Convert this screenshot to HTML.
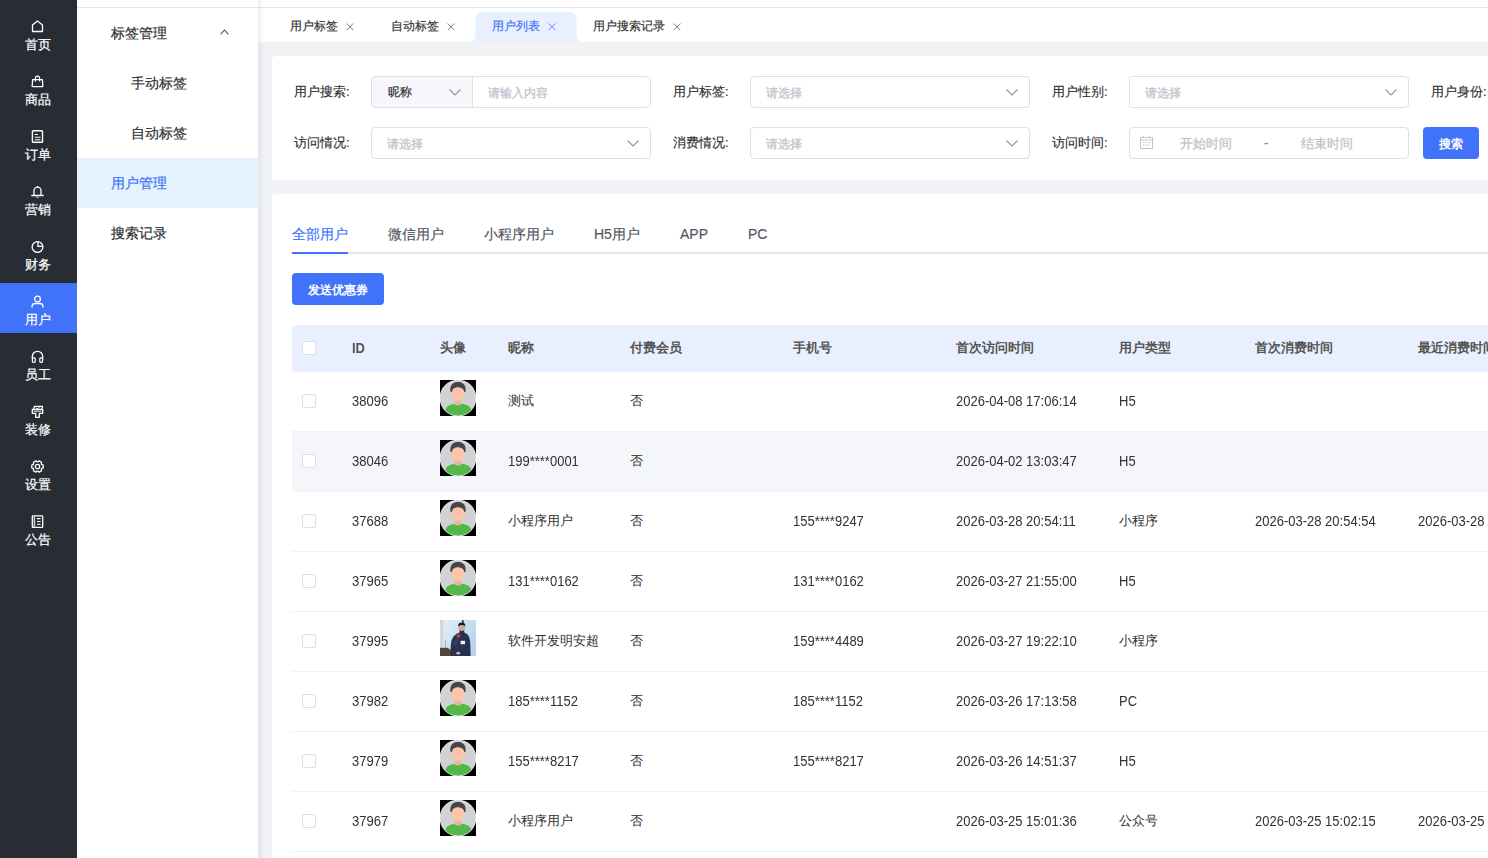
<!DOCTYPE html>
<html><head><meta charset="utf-8">
<style>
*{box-sizing:border-box;margin:0;padding:0}
html,body{width:1488px;height:858px;overflow:hidden;background:#f0f2f5;font-family:"Liberation Sans",sans-serif;color:#303133}
#side{position:absolute;left:0;top:0;width:77px;height:858px;background:#282c35}
.si{position:absolute;left:0;width:77px;height:50px;color:#fff;text-align:center}
.si.act{background:#4073fa}
.si svg{position:absolute;left:31px;top:12px;width:13px;height:13px}
.si span{position:absolute;left:-1px;width:77px;top:29px;font-size:13px;line-height:16px;font-weight:normal;-webkit-text-stroke:0.2px #fff}
#sub{position:absolute;left:77px;top:0;width:181px;height:858px;background:#fff}
.mi{position:absolute;left:0;width:181px;height:50px;font-size:14px;line-height:51px;color:#303133;-webkit-text-stroke:0.2px currentColor}
.mi.act{background:#e6f2fe;color:#4073fa}
#topline{position:absolute;left:77px;top:0;width:1411px;height:8px;background:#fff;border-bottom:1px solid #e6e8f0}
#tabs{position:absolute;left:258px;top:8px;width:1230px;height:34px;background:#fff}
.tb{position:absolute;top:0;height:34px;font-size:12px;line-height:37px;color:#303133;white-space:nowrap;-webkit-text-stroke:0.15px currentColor}
.x{position:absolute;top:15px;width:8px;height:7.5px}
.card{position:absolute;background:#fff;border-radius:4px}
.lbl{position:absolute;font-size:13px;line-height:16px;color:#303133;white-space:nowrap;-webkit-text-stroke:0.15px currentColor}
.inp{position:absolute;border:1px solid #dcdfe6;border-radius:4px;background:#fff;height:32px}
.ph{position:absolute;font-size:12px;line-height:16px;color:#c0c4cc;white-space:nowrap;-webkit-text-stroke:0.3px #c0c4cc}
.chev{position:absolute;width:12px;height:7px}
.btn{position:absolute;background:#4073fa;color:#fff;border-radius:4px;font-size:12px;font-weight:bold;text-align:center;padding-top:1px}
.th{position:absolute;font-size:13px;font-weight:bold;color:#555;line-height:16px;white-space:nowrap}
.lt{transform:scaleY(1.09);transform-origin:0 3px}
.row{position:absolute;left:292px;width:1196px;height:60px;border-bottom:1px solid #f2f2f2}
.row.st{background:#f5f6fa}
.td{position:absolute;font-size:13px;line-height:16px;color:#303133;top:21px;white-space:nowrap}
.cb{position:absolute;width:14px;height:14px;border:1px solid #dcdfe6;border-radius:2px;background:#fff}
.av{position:absolute;top:8px;width:36px;height:36px}
.ctab{position:absolute;top:226px;font-size:14px;line-height:16px;color:#505460;white-space:nowrap;-webkit-text-stroke:0.15px currentColor}
</style></head><body>

<div id="side">
<div class="si" style="top:8px"><svg viewBox="0 0 13 13"><path d="M1.5 11.5V5L6.5 1L11.5 5V11.5Z" fill="none" stroke="#fff" stroke-width="1.3" stroke-linejoin="round"/></svg><span>首页</span></div>
<div class="si" style="top:63px"><svg viewBox="0 0 13 13"><path d="M1.2 11.6L1.6 4.6H11.4L11.8 11.6Z" fill="none" stroke="#fff" stroke-width="1.3" stroke-linejoin="round"/><path d="M4.4 6.5V3.3A2.1 2.1 0 0 1 8.6 3.3V6.5" fill="none" stroke="#fff" stroke-width="1.2"/></svg><span>商品</span></div>
<div class="si" style="top:118px"><svg viewBox="0 0 13 13"><rect x="1.4" y="0.8" width="10.1" height="11.4" rx="0.8" fill="none" stroke="#fff" stroke-width="1.4"/><path d="M3.6 4.5H7M3.8 7.3H9.4M3.8 9.7H9.4" stroke="#fff" stroke-width="1.1"/></svg><span>订单</span></div>
<div class="si" style="top:173px"><svg viewBox="0 0 13 13"><path d="M3 10.2V5.6A3.5 3.5 0 0 1 10 5.6V10.2" fill="none" stroke="#fff" stroke-width="1.3"/><path d="M0.8 10.5H12.2" stroke="#fff" stroke-width="1.3" stroke-linecap="round"/><path d="M5.6 12.4H7.4" stroke="#fff" stroke-width="1"/><path d="M6.5 1.2V2.2" stroke="#fff" stroke-width="1.2"/></svg><span>营销</span></div>
<div class="si" style="top:228px"><svg viewBox="0 0 13 13"><circle cx="6.5" cy="7" r="5.4" fill="none" stroke="#fff" stroke-width="1.3"/><path d="M7 1.4V6.3H12" fill="none" stroke="#fff" stroke-width="1.3"/></svg><span>财务</span></div>
<div class="si act" style="top:283px"><svg viewBox="0 0 13 13"><circle cx="6.5" cy="4" r="2.9" fill="none" stroke="#fff" stroke-width="1.3"/><path d="M1 12.4V11.4A3.2 3.2 0 0 1 4.2 8.5H8.8A3.2 3.2 0 0 1 12 11.4V12.4" fill="none" stroke="#fff" stroke-width="1.3"/></svg><span>用户</span></div>
<div class="si" style="top:338px"><svg viewBox="0 0 13 13"><path d="M1.3 9V6.5A5.2 5.2 0 0 1 11.7 6.5V9" fill="none" stroke="#fff" stroke-width="1.3"/><rect x="1.4" y="7.8" width="2.8" height="4.5" rx="1" fill="none" stroke="#fff" stroke-width="1.2"/><rect x="8.8" y="7.8" width="2.8" height="4.5" rx="1" fill="none" stroke="#fff" stroke-width="1.2"/></svg><span>员工</span></div>
<div class="si" style="top:393px"><svg viewBox="0 0 13 13"><path d="M2.6 4.3L3.4 1.4H11.6L10.8 4.3" fill="none" stroke="#fff" stroke-width="1.3" stroke-linejoin="round"/><path d="M5 3L6.8 3.6L8.6 2.4" fill="none" stroke="#fff" stroke-width="0.9"/><path d="M1.3 4.5H11.7V8.3H8.3V12.3H4.7V8.3H1.3Z" fill="none" stroke="#fff" stroke-width="1.3" stroke-linejoin="round"/><path d="M3 6.4H10" stroke="#fff" stroke-width="0.8"/></svg><span>装修</span></div>
<div class="si" style="top:448px"><svg viewBox="0 0 13 13"><path d="M10.63 4.48 L12.22 5.07 L12.22 7.93 L10.63 8.52 L10.31 9.07 L10.60 10.74 L8.13 12.17 L6.82 11.09 L6.18 11.09 L4.87 12.17 L2.40 10.74 L2.69 9.07 L2.37 8.52 L0.78 7.93 L0.78 5.07 L2.37 4.48 L2.69 3.93 L2.40 2.26 L4.87 0.83 L6.18 1.91 L6.82 1.91 L8.13 0.83 L10.60 2.26 L10.31 3.93Z" fill="none" stroke="#fff" stroke-width="1.3" stroke-linejoin="round"/><circle cx="6.5" cy="6.5" r="2.2" fill="none" stroke="#fff" stroke-width="1.3"/></svg><span>设置</span></div>
<div class="si" style="top:503px"><svg viewBox="0 0 13 13"><rect x="1.3" y="0.9" width="10.4" height="11.6" rx="0.8" fill="none" stroke="#fff" stroke-width="1.3"/><path d="M3.4 1.5V12" stroke="#ccc" stroke-width="1.6"/><path d="M6 3.6H9.5M6 6.5H9.5M6 9.3H9.5" stroke="#fff" stroke-width="1.1"/></svg><span>公告</span></div>
</div>
<div id="sub">
<div class="mi" style="top:8px;padding-left:34px">标签管理</div>
<div class="mi" style="top:58px;padding-left:54px">手动标签</div>
<div class="mi" style="top:108px;padding-left:54px">自动标签</div>
<div class="mi act" style="top:158px;padding-left:34px">用户管理</div>
<div class="mi" style="top:208px;padding-left:34px">搜索记录</div>
<svg style="position:absolute;left:142.5px;top:29px;width:9px;height:6px" viewBox="0 0 9 6"><path d="M0.6 5.4L4.5 1.2L8.4 5.4" fill="none" stroke="#606266" stroke-width="1.15"/></svg>
</div>
<div id="topline"></div>
<div id="tabs">
<svg style="position:absolute;left:214px;top:4px;width:108px;height:30px" viewBox="0 0 108 30"><path d="M0 30L1.2 28.6C2.8 26.6 3.5 25 3.5 22V6A6 6 0 0 1 9.5 0H98.5A6 6 0 0 1 104.5 6V22C104.5 25 105.2 26.6 106.8 28.6L108 30Z" fill="#e8effe"/></svg>
<div class="tb" style="left:32px;color:#303133">用户标签</div>
<svg class="x" style="left:88px" viewBox="0 0 8 8"><path d="M0.5 0.5L7.5 7.5M7.5 0.5L0.5 7.5" stroke="#606266" stroke-width="0.9"/></svg>
<div class="tb" style="left:133px;color:#303133">自动标签</div>
<svg class="x" style="left:189px" viewBox="0 0 8 8"><path d="M0.5 0.5L7.5 7.5M7.5 0.5L0.5 7.5" stroke="#606266" stroke-width="0.9"/></svg>
<div class="tb" style="left:234px;color:#4073fa">用户列表</div>
<svg class="x" style="left:290px" viewBox="0 0 8 8"><path d="M0.5 0.5L7.5 7.5M7.5 0.5L0.5 7.5" stroke="#4073fa" stroke-width="0.9"/></svg>
<div class="tb" style="left:335px;color:#303133">用户搜索记录</div>
<svg class="x" style="left:415px" viewBox="0 0 8 8"><path d="M0.5 0.5L7.5 7.5M7.5 0.5L0.5 7.5" stroke="#606266" stroke-width="0.9"/></svg>
</div>
<div class="card" style="left:272px;top:56px;width:1240px;height:124px"></div>
<div class="lbl" style="left:294px;top:84px">用户搜索:</div>
<div class="lbl" style="left:673px;top:84px">用户标签:</div>
<div class="lbl" style="left:1052px;top:84px">用户性别:</div>
<div class="lbl" style="left:1431px;top:84px">用户身份:</div>
<div class="lbl" style="left:294px;top:135px">访问情况:</div>
<div class="lbl" style="left:673px;top:135px">消费情况:</div>
<div class="lbl" style="left:1052px;top:135px">访问时间:</div>
<div class="inp" style="left:371px;top:76px;width:280px"></div>
<div style="position:absolute;left:372px;top:77px;width:101px;height:30px;background:#f5f7fa;border-right:1px solid #dcdfe6;border-radius:3px 0 0 3px"></div>
<div style="position:absolute;left:388px;top:84px;font-size:12px;line-height:16px;color:#303133;-webkit-text-stroke:0.2px #303133">昵称</div>
<svg class="chev" style="left:449px;top:89px" viewBox="0 0 12 7"><path d="M0.5 0.5L6 6L11.5 0.5" fill="none" stroke="#909399" stroke-width="1.1"/></svg>
<div class="ph" style="left:488px;top:85px">请输入内容</div>
<div class="inp" style="left:750px;top:76px;width:280px"></div>
<div class="ph" style="left:766px;top:85px">请选择</div>
<svg class="chev" style="left:1006px;top:89px" viewBox="0 0 12 7"><path d="M0.5 0.5L6 6L11.5 0.5" fill="none" stroke="#909399" stroke-width="1.1"/></svg>
<div class="inp" style="left:1129px;top:76px;width:280px"></div>
<div class="ph" style="left:1145px;top:85px">请选择</div>
<svg class="chev" style="left:1385px;top:89px" viewBox="0 0 12 7"><path d="M0.5 0.5L6 6L11.5 0.5" fill="none" stroke="#909399" stroke-width="1.1"/></svg>
<div class="inp" style="left:371px;top:127px;width:280px"></div>
<div class="ph" style="left:387px;top:136px">请选择</div>
<svg class="chev" style="left:627px;top:140px" viewBox="0 0 12 7"><path d="M0.5 0.5L6 6L11.5 0.5" fill="none" stroke="#909399" stroke-width="1.1"/></svg>
<div class="inp" style="left:750px;top:127px;width:280px"></div>
<div class="ph" style="left:766px;top:136px">请选择</div>
<svg class="chev" style="left:1006px;top:140px" viewBox="0 0 12 7"><path d="M0.5 0.5L6 6L11.5 0.5" fill="none" stroke="#909399" stroke-width="1.1"/></svg>
<div class="inp" style="left:1129px;top:127px;width:280px"></div>
<svg style="position:absolute;left:1140px;top:136px;width:13px;height:13px" viewBox="0 0 13 13"><rect x="0.5" y="1.5" width="12" height="11" fill="none" stroke="#c0c4cc" stroke-width="1"/><path d="M0.5 4H12.5M3 6.5h1.5M5.75 6.5h1.5M8.5 6.5h1.5M3 9h1.5M5.75 9h1.5M8.5 9h1.5M3.5 0V2M9.5 0V2" stroke="#c0c4cc" stroke-width="1"/></svg>
<div class="ph" style="left:1180px;top:136px;font-size:13px">开始时间</div>
<div class="ph" style="left:1264px;top:135px;font-size:13px;color:#606266">-</div>
<div class="ph" style="left:1301px;top:136px;font-size:13px">结束时间</div>
<div class="btn" style="left:1423px;top:127px;width:56px;height:32px;line-height:32px">搜索</div>
<div class="card" style="left:272px;top:194px;width:1240px;height:700px"></div>
<div style="position:absolute;left:292px;top:252px;width:1196px;height:2px;background:#e4e7ed"></div>
<div style="position:absolute;left:292px;top:252px;width:56px;height:2px;background:#4073fa"></div>
<div class="ctab" style="left:292px;color:#4073fa">全部用户</div>
<div class="ctab" style="left:388px;color:#505460">微信用户</div>
<div class="ctab" style="left:484px;color:#505460">小程序用户</div>
<div class="ctab" style="left:594px;color:#505460">H5用户</div>
<div class="ctab" style="left:680px;color:#505460">APP</div>
<div class="ctab" style="left:748px;color:#505460">PC</div>
<div class="btn" style="left:292px;top:273px;width:92px;height:32px;line-height:32px">发送优惠券</div>
<div style="position:absolute;left:292px;top:325px;width:1210px;height:47px;background:#e8effe;border-radius:4px"></div>
<div class="cb" style="left:302px;top:341px"></div>
<div class="th lt" style="left:352px;top:340px">ID</div>
<div class="th" style="left:440px;top:340px">头像</div>
<div class="th" style="left:508px;top:340px">昵称</div>
<div class="th" style="left:630px;top:340px">付费会员</div>
<div class="th" style="left:793px;top:340px">手机号</div>
<div class="th" style="left:956px;top:340px">首次访问时间</div>
<div class="th" style="left:1119px;top:340px">用户类型</div>
<div class="th" style="left:1255px;top:340px">首次消费时间</div>
<div class="th" style="left:1418px;top:340px">最近消费时间</div>
<div class="row" style="top:372px">
<div class="cb" style="left:10px;top:22px"></div>
<div class="td lt" style="left:60px">38096</div>
<svg class="av" style="left:148px" viewBox="0 0 36 36"><rect width="36" height="36" fill="#000"/><circle cx="18" cy="18" r="18.3" fill="#eeeeee"/><circle cx="18" cy="18" r="17.7" fill="#d1d2d3"/><clipPath id="c0"><circle cx="18" cy="18" r="17.7"/></clipPath><g clip-path="url(#c0)"><ellipse cx="18.4" cy="29.6" rx="12.7" ry="6.2" fill="#52b848"/><path d="M14.9 18.5H21V24.8Q18 26.2 14.9 24.8Z" fill="#f0b396"/><ellipse cx="11.9" cy="13.6" rx="1.3" ry="1.8" fill="#fbc2a6"/><ellipse cx="24.5" cy="13.6" rx="1.3" ry="1.8" fill="#fbc2a6"/><ellipse cx="18.2" cy="13.6" rx="6" ry="7.2" fill="#fcc4a9"/><path d="M10.4 11.6C9.6 4.4 13.2 1.9 18 1.9S26.4 4.4 25.6 11.6L24.3 12.2C23.9 9.6 22.6 8.2 20.6 7.8C19.1 7.5 18.3 7.5 17.6 6.8C17 7.5 15.6 7.7 14.1 8.3C12.7 9 12.1 10.5 11.9 12.2Z" fill="#45464c"/></g></svg>
<div class="td" style="left:216px">测试</div>
<div class="td" style="left:338px">否</div>
<div class="td lt" style="left:664px">2026-04-08 17:06:14</div>
<div class="td lt" style="left:827px">H5</div>
</div>
<div class="row st" style="top:432px">
<div class="cb" style="left:10px;top:22px"></div>
<div class="td lt" style="left:60px">38046</div>
<svg class="av" style="left:148px" viewBox="0 0 36 36"><rect width="36" height="36" fill="#000"/><circle cx="18" cy="18" r="18.3" fill="#eeeeee"/><circle cx="18" cy="18" r="17.7" fill="#d1d2d3"/><clipPath id="c1"><circle cx="18" cy="18" r="17.7"/></clipPath><g clip-path="url(#c1)"><ellipse cx="18.4" cy="29.6" rx="12.7" ry="6.2" fill="#52b848"/><path d="M14.9 18.5H21V24.8Q18 26.2 14.9 24.8Z" fill="#f0b396"/><ellipse cx="11.9" cy="13.6" rx="1.3" ry="1.8" fill="#fbc2a6"/><ellipse cx="24.5" cy="13.6" rx="1.3" ry="1.8" fill="#fbc2a6"/><ellipse cx="18.2" cy="13.6" rx="6" ry="7.2" fill="#fcc4a9"/><path d="M10.4 11.6C9.6 4.4 13.2 1.9 18 1.9S26.4 4.4 25.6 11.6L24.3 12.2C23.9 9.6 22.6 8.2 20.6 7.8C19.1 7.5 18.3 7.5 17.6 6.8C17 7.5 15.6 7.7 14.1 8.3C12.7 9 12.1 10.5 11.9 12.2Z" fill="#45464c"/></g></svg>
<div class="td lt" style="left:216px">199****0001</div>
<div class="td" style="left:338px">否</div>
<div class="td lt" style="left:664px">2026-04-02 13:03:47</div>
<div class="td lt" style="left:827px">H5</div>
</div>
<div class="row" style="top:492px">
<div class="cb" style="left:10px;top:22px"></div>
<div class="td lt" style="left:60px">37688</div>
<svg class="av" style="left:148px" viewBox="0 0 36 36"><rect width="36" height="36" fill="#000"/><circle cx="18" cy="18" r="18.3" fill="#eeeeee"/><circle cx="18" cy="18" r="17.7" fill="#d1d2d3"/><clipPath id="c2"><circle cx="18" cy="18" r="17.7"/></clipPath><g clip-path="url(#c2)"><ellipse cx="18.4" cy="29.6" rx="12.7" ry="6.2" fill="#52b848"/><path d="M14.9 18.5H21V24.8Q18 26.2 14.9 24.8Z" fill="#f0b396"/><ellipse cx="11.9" cy="13.6" rx="1.3" ry="1.8" fill="#fbc2a6"/><ellipse cx="24.5" cy="13.6" rx="1.3" ry="1.8" fill="#fbc2a6"/><ellipse cx="18.2" cy="13.6" rx="6" ry="7.2" fill="#fcc4a9"/><path d="M10.4 11.6C9.6 4.4 13.2 1.9 18 1.9S26.4 4.4 25.6 11.6L24.3 12.2C23.9 9.6 22.6 8.2 20.6 7.8C19.1 7.5 18.3 7.5 17.6 6.8C17 7.5 15.6 7.7 14.1 8.3C12.7 9 12.1 10.5 11.9 12.2Z" fill="#45464c"/></g></svg>
<div class="td" style="left:216px">小程序用户</div>
<div class="td" style="left:338px">否</div>
<div class="td lt" style="left:501px">155****9247</div>
<div class="td lt" style="left:664px">2026-03-28 20:54:11</div>
<div class="td" style="left:827px">小程序</div>
<div class="td lt" style="left:963px">2026-03-28 20:54:54</div>
<div class="td lt" style="left:1126px">2026-03-28 20:54:54</div>
</div>
<div class="row" style="top:552px">
<div class="cb" style="left:10px;top:22px"></div>
<div class="td lt" style="left:60px">37965</div>
<svg class="av" style="left:148px" viewBox="0 0 36 36"><rect width="36" height="36" fill="#000"/><circle cx="18" cy="18" r="18.3" fill="#eeeeee"/><circle cx="18" cy="18" r="17.7" fill="#d1d2d3"/><clipPath id="c3"><circle cx="18" cy="18" r="17.7"/></clipPath><g clip-path="url(#c3)"><ellipse cx="18.4" cy="29.6" rx="12.7" ry="6.2" fill="#52b848"/><path d="M14.9 18.5H21V24.8Q18 26.2 14.9 24.8Z" fill="#f0b396"/><ellipse cx="11.9" cy="13.6" rx="1.3" ry="1.8" fill="#fbc2a6"/><ellipse cx="24.5" cy="13.6" rx="1.3" ry="1.8" fill="#fbc2a6"/><ellipse cx="18.2" cy="13.6" rx="6" ry="7.2" fill="#fcc4a9"/><path d="M10.4 11.6C9.6 4.4 13.2 1.9 18 1.9S26.4 4.4 25.6 11.6L24.3 12.2C23.9 9.6 22.6 8.2 20.6 7.8C19.1 7.5 18.3 7.5 17.6 6.8C17 7.5 15.6 7.7 14.1 8.3C12.7 9 12.1 10.5 11.9 12.2Z" fill="#45464c"/></g></svg>
<div class="td lt" style="left:216px">131****0162</div>
<div class="td" style="left:338px">否</div>
<div class="td lt" style="left:501px">131****0162</div>
<div class="td lt" style="left:664px">2026-03-27 21:55:00</div>
<div class="td lt" style="left:827px">H5</div>
</div>
<div class="row" style="top:612px">
<div class="cb" style="left:10px;top:22px"></div>
<div class="td lt" style="left:60px">37995</div>
<svg class="av" style="left:148px" viewBox="0 0 36 36"><defs><linearGradient id="pg" x1="0" y1="0" x2="1" y2="0.6"><stop offset="0" stop-color="#e6f2f8"/><stop offset="1" stop-color="#b6d4ec"/></linearGradient><filter id="bl" x="-10%" y="-10%" width="120%" height="120%"><feGaussianBlur stdDeviation="0.6"/></filter></defs><rect width="36" height="36" fill="url(#pg)"/><g filter="url(#bl)"><rect x="0" y="0" width="4.5" height="36" fill="#dde6e6"/><rect x="0.6" y="0" width="1.8" height="27" fill="#c8d2cf"/><rect x="5" y="20" width="0.8" height="8" fill="#9aa4a8"/><path d="M22.2 0H23.6V3.5H22.2Z" fill="#1c2230"/><path d="M0 27.8L7.5 27.8L12.5 31L13 36H0Z" fill="#51443c"/><path d="M10.5 36L10.8 25Q11 19.5 13.5 16.5L17 13.4L19.5 12.6H24.5L27 14Q30 16.5 30.3 24L30.6 36Z" fill="#283350"/><path d="M19.6 10H24.2V13.5H19.6Z" fill="#2a3248"/><path d="M13.4 24.5L16.2 17.8L19 18.8L16.4 25.5Z" fill="#34405e"/><ellipse cx="21.8" cy="7" rx="3.5" ry="4.1" fill="#c9ab98"/><path d="M18.2 6.6Q17.8 2.6 21.8 2.6Q25.6 2.6 25.4 6.4Q24 4.8 21.5 5Q19.3 5.3 18.2 6.6Z" fill="#1d1e25"/><circle cx="18.6" cy="15.8" r="1.9" fill="#e2303e"/><rect x="20.6" y="20.8" width="4.4" height="3.4" fill="#f4f6fa"/><ellipse cx="18.2" cy="33.2" rx="2" ry="1.4" fill="#cfb0a6"/></g></svg>
<div class="td" style="left:216px">软件开发明安超</div>
<div class="td" style="left:338px">否</div>
<div class="td lt" style="left:501px">159****4489</div>
<div class="td lt" style="left:664px">2026-03-27 19:22:10</div>
<div class="td" style="left:827px">小程序</div>
</div>
<div class="row" style="top:672px">
<div class="cb" style="left:10px;top:22px"></div>
<div class="td lt" style="left:60px">37982</div>
<svg class="av" style="left:148px" viewBox="0 0 36 36"><rect width="36" height="36" fill="#000"/><circle cx="18" cy="18" r="18.3" fill="#eeeeee"/><circle cx="18" cy="18" r="17.7" fill="#d1d2d3"/><clipPath id="c5"><circle cx="18" cy="18" r="17.7"/></clipPath><g clip-path="url(#c5)"><ellipse cx="18.4" cy="29.6" rx="12.7" ry="6.2" fill="#52b848"/><path d="M14.9 18.5H21V24.8Q18 26.2 14.9 24.8Z" fill="#f0b396"/><ellipse cx="11.9" cy="13.6" rx="1.3" ry="1.8" fill="#fbc2a6"/><ellipse cx="24.5" cy="13.6" rx="1.3" ry="1.8" fill="#fbc2a6"/><ellipse cx="18.2" cy="13.6" rx="6" ry="7.2" fill="#fcc4a9"/><path d="M10.4 11.6C9.6 4.4 13.2 1.9 18 1.9S26.4 4.4 25.6 11.6L24.3 12.2C23.9 9.6 22.6 8.2 20.6 7.8C19.1 7.5 18.3 7.5 17.6 6.8C17 7.5 15.6 7.7 14.1 8.3C12.7 9 12.1 10.5 11.9 12.2Z" fill="#45464c"/></g></svg>
<div class="td lt" style="left:216px">185****1152</div>
<div class="td" style="left:338px">否</div>
<div class="td lt" style="left:501px">185****1152</div>
<div class="td lt" style="left:664px">2026-03-26 17:13:58</div>
<div class="td lt" style="left:827px">PC</div>
</div>
<div class="row" style="top:732px">
<div class="cb" style="left:10px;top:22px"></div>
<div class="td lt" style="left:60px">37979</div>
<svg class="av" style="left:148px" viewBox="0 0 36 36"><rect width="36" height="36" fill="#000"/><circle cx="18" cy="18" r="18.3" fill="#eeeeee"/><circle cx="18" cy="18" r="17.7" fill="#d1d2d3"/><clipPath id="c6"><circle cx="18" cy="18" r="17.7"/></clipPath><g clip-path="url(#c6)"><ellipse cx="18.4" cy="29.6" rx="12.7" ry="6.2" fill="#52b848"/><path d="M14.9 18.5H21V24.8Q18 26.2 14.9 24.8Z" fill="#f0b396"/><ellipse cx="11.9" cy="13.6" rx="1.3" ry="1.8" fill="#fbc2a6"/><ellipse cx="24.5" cy="13.6" rx="1.3" ry="1.8" fill="#fbc2a6"/><ellipse cx="18.2" cy="13.6" rx="6" ry="7.2" fill="#fcc4a9"/><path d="M10.4 11.6C9.6 4.4 13.2 1.9 18 1.9S26.4 4.4 25.6 11.6L24.3 12.2C23.9 9.6 22.6 8.2 20.6 7.8C19.1 7.5 18.3 7.5 17.6 6.8C17 7.5 15.6 7.7 14.1 8.3C12.7 9 12.1 10.5 11.9 12.2Z" fill="#45464c"/></g></svg>
<div class="td lt" style="left:216px">155****8217</div>
<div class="td" style="left:338px">否</div>
<div class="td lt" style="left:501px">155****8217</div>
<div class="td lt" style="left:664px">2026-03-26 14:51:37</div>
<div class="td lt" style="left:827px">H5</div>
</div>
<div class="row" style="top:792px">
<div class="cb" style="left:10px;top:22px"></div>
<div class="td lt" style="left:60px">37967</div>
<svg class="av" style="left:148px" viewBox="0 0 36 36"><rect width="36" height="36" fill="#000"/><circle cx="18" cy="18" r="18.3" fill="#eeeeee"/><circle cx="18" cy="18" r="17.7" fill="#d1d2d3"/><clipPath id="c7"><circle cx="18" cy="18" r="17.7"/></clipPath><g clip-path="url(#c7)"><ellipse cx="18.4" cy="29.6" rx="12.7" ry="6.2" fill="#52b848"/><path d="M14.9 18.5H21V24.8Q18 26.2 14.9 24.8Z" fill="#f0b396"/><ellipse cx="11.9" cy="13.6" rx="1.3" ry="1.8" fill="#fbc2a6"/><ellipse cx="24.5" cy="13.6" rx="1.3" ry="1.8" fill="#fbc2a6"/><ellipse cx="18.2" cy="13.6" rx="6" ry="7.2" fill="#fcc4a9"/><path d="M10.4 11.6C9.6 4.4 13.2 1.9 18 1.9S26.4 4.4 25.6 11.6L24.3 12.2C23.9 9.6 22.6 8.2 20.6 7.8C19.1 7.5 18.3 7.5 17.6 6.8C17 7.5 15.6 7.7 14.1 8.3C12.7 9 12.1 10.5 11.9 12.2Z" fill="#45464c"/></g></svg>
<div class="td" style="left:216px">小程序用户</div>
<div class="td" style="left:338px">否</div>
<div class="td lt" style="left:664px">2026-03-25 15:01:36</div>
<div class="td" style="left:827px">公众号</div>
<div class="td lt" style="left:963px">2026-03-25 15:02:15</div>
<div class="td lt" style="left:1126px">2026-03-25 15:02:15</div>
</div>
<div style="position:absolute;left:258px;top:0;width:6px;height:858px;background:linear-gradient(to right,rgba(0,10,40,0.06),rgba(0,10,40,0))"></div>
</body></html>
